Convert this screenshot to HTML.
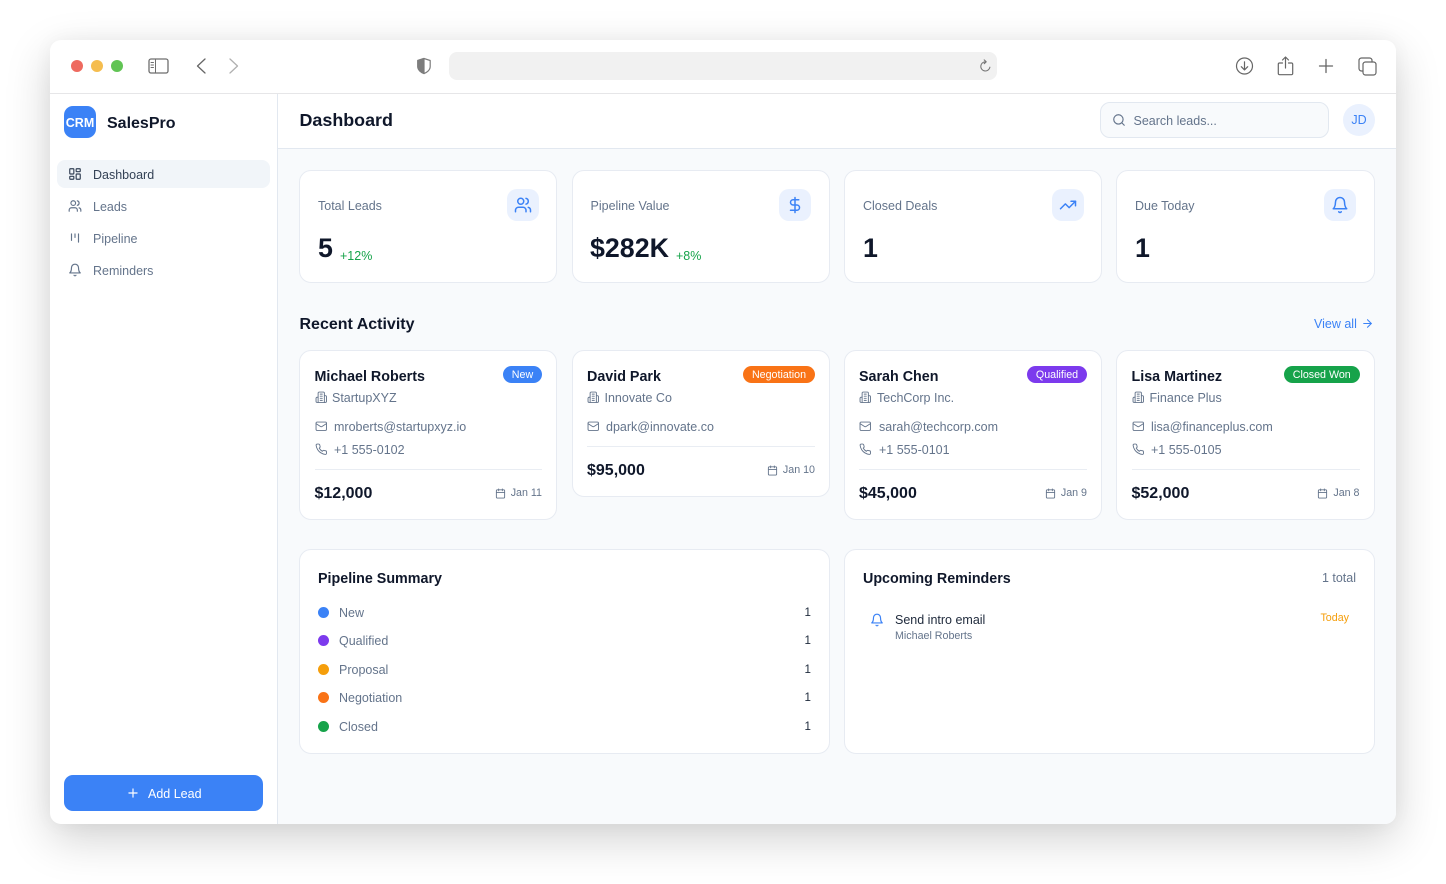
<!DOCTYPE html>
<html><head><meta charset="utf-8"><title>SalesPro</title>
<style>
html,body{margin:0;padding:0;width:1446px;height:884px;overflow:hidden;background:#fff;font-family:"Liberation Sans",sans-serif}
body{filter:blur(.3px)}
.a,.t,svg{position:absolute}
.t{line-height:20px;height:20px;white-space:nowrap;font-size:12.5px;color:#64748b}
.r{text-align:right}
.b{font-weight:700;color:#0f172a}
.card{position:absolute;background:#fff;border:1px solid #e7ebf2;border-radius:12px;box-sizing:border-box}
svg{fill:none;stroke:currentColor;stroke-linecap:round;stroke-linejoin:round;stroke-width:2}
.ib{position:absolute;width:32px;height:32px;top:189px;background:#eaf1fe;border-radius:10px;color:#3b82f6}
.badge{position:absolute;top:366px;height:17px;line-height:18px;border-radius:9px;color:#fff;font-size:10.7px;text-align:center}
.line{position:absolute;height:1px;background:#e9edf3}
.dot{position:absolute;left:318px;width:11px;height:11px;border-radius:50%}
</style></head><body>
<div class="a" id="win" style="left:50px;top:40px;width:1346px;height:784px;background:#fff;border-radius:11px;box-shadow:0 15px 45px rgba(0,0,0,.18),0 0 20px rgba(0,0,0,.04)"></div>
<div class="a" style="left:278px;top:94px;width:1118px;height:730px;background:#f8fafc;border-bottom-right-radius:11px"></div>
<div class="a" style="left:50px;top:93px;width:1346px;height:1px;background:#e6e6e8"></div>
<div class="a" style="left:277px;top:94px;width:1px;height:730px;background:#e2e8f0"></div>
<div class="a" style="left:278px;top:94px;width:1118px;height:54px;background:#fff;border-bottom:1px solid #e2e8f0"></div>

<!-- toolbar -->
<div class="a" style="left:70.750px;top:59.750px;width:12.500px;height:12.500px;border-radius:50%;background:#ee6a5f"></div>
<div class="a" style="left:90.750px;top:59.750px;width:12.500px;height:12.500px;border-radius:50%;background:#f5bd4f"></div>
<div class="a" style="left:110.750px;top:59.750px;width:12.500px;height:12.500px;border-radius:50%;background:#61c454"></div>
<svg style="left:148px;top:57px;color:#6e6e6e;stroke-width:1.3" width="21" height="18" viewBox="0 0 21 18"><rect x="1" y="2" width="19" height="14" rx="2"/><path d="M7.500 2v14M3 5.500h2.500M3 8h2.500M3 10.500h2.500" stroke-width="1"/></svg>
<svg style="left:194px;top:57px;color:#666;stroke-width:1.3" width="14" height="18" viewBox="0 0 14 18"><path d="M11 2 3.500 9l7.500 7"/></svg>
<svg style="left:227px;top:57px;color:#b0b0b0;stroke-width:1.3" width="14" height="18" viewBox="0 0 14 18"><path d="M3 2l7.500 7L3 16"/></svg>
<svg style="left:416px;top:57px;color:#7d7d7d;stroke-width:1.2" width="16" height="18" viewBox="0 0 16 18"><path d="M8 1.500 1.800 3.500v6C1.800 13 5 15.500 8 16.500c3-1 6.200-3.500 6.200-7v-6z"/><path d="M8 1.500 1.800 3.500v6C1.800 13 5 15.500 8 16.500z" fill="#7d7d7d"/></svg>
<div class="a" style="left:449px;top:52px;width:548px;height:28px;border-radius:8px;background:#f1f1f1"></div>
<svg style="left:978px;top:59px;color:#757575;stroke-width:1.1" width="14" height="14" viewBox="0 0 14 14"><path d="M7.500 2.800a4.600 4.600 0 1 0 4.400 5.400M6.200 .9l2 1.900-2 1.900"/></svg>
<svg style="left:1235px;top:57px;color:#666;stroke-width:1.2" width="19" height="18" viewBox="0 0 19 18"><circle cx="9.500" cy="9" r="8"/><path d="M9.500 4.800v8M6.300 9.700l3.200 3.200 3.200-3.200"/></svg>
<svg style="left:1277px;top:56px;color:#666;stroke-width:1.2" width="17" height="20" viewBox="0 0 17 20"><path d="M5.500 7H2.500a1.200 1.200 0 0 0-1.200 1.200v9.300a1.200 1.200 0 0 0 1.200 1.200h12a1.200 1.200 0 0 0 1.200-1.200V8.200A1.200 1.200 0 0 0 14.500 7h-3M8.500 12V1.500M5.500 4l3-3 3 3"/></svg>
<svg style="left:1318px;top:58px;color:#666;stroke-width:1.3" width="16" height="16" viewBox="0 0 16 16"><path d="M8 1.500v13M1.500 8h13"/></svg>
<svg style="left:1358px;top:57px;color:#666;stroke-width:1.2" width="19" height="19" viewBox="0 0 19 19"><rect x="5" y="5" width="13" height="13" rx="2.500"/><path d="M5 14H3.500A2.500 2.500 0 0 1 1 11.500v-8A2.500 2.500 0 0 1 3.500 1h8A2.500 2.500 0 0 1 14 3.500V5"/></svg>

<!-- sidebar -->
<div class="a" style="left:64px;top:106px;width:32px;height:32px;border-radius:9px;background:#3b82f6;color:#fff;font-weight:700;font-size:12.5px;line-height:34px;text-align:center">CRM</div>
<div class="t b" style="left:107px;top:113.500px;font-size:16px;color:#0f172a">SalesPro</div>
<div class="a" style="left:57px;top:160px;width:213px;height:28px;border-radius:8px;background:#f1f5f9"></div>
<svg style="left:68px;top:167px;color:#334155" width="14" height="14" viewBox="0 0 24 24"><rect x="3" y="3" width="7" height="9" rx="1"/><rect x="14" y="3" width="7" height="5" rx="1"/><rect x="14" y="12" width="7" height="9" rx="1"/><rect x="3" y="16" width="7" height="5" rx="1"/></svg>
<div class="t" style="left:93px;top:164.500px;color:#334155">Dashboard</div>
<svg style="left:68px;top:199px;color:#64748b" width="14" height="14" viewBox="0 0 24 24"><path d="M16 21v-2a4 4 0 0 0-4-4H6a4 4 0 0 0-4 4v2"/><circle cx="9" cy="7" r="4"/><path d="M22 21v-2a4 4 0 0 0-3-3.870"/><path d="M16 3.130a4 4 0 0 1 0 7.750"/></svg>
<div class="t" style="left:93px;top:196.500px">Leads</div>
<svg style="left:68px;top:231px;color:#64748b" width="14" height="14" viewBox="0 0 24 24"><path d="M6 5v11M12 5v6M18 5v14"/></svg>
<div class="t" style="left:93px;top:228.500px">Pipeline</div>
<svg style="left:68px;top:263px;color:#64748b" width="14" height="14" viewBox="0 0 24 24"><path d="M6 8a6 6 0 0 1 12 0c0 7 3 9 3 9H3s3-2 3-9"/><path d="M10.300 21a1.940 1.940 0 0 0 3.400 0"/></svg>
<div class="t" style="left:93px;top:260.500px">Reminders</div>
<div class="a" style="left:64px;top:775px;width:199px;height:36px;border-radius:9px;background:#3b82f6"></div>
<svg style="left:126px;top:786px;color:#fff" width="14" height="14" viewBox="0 0 24 24"><path d="M5 12h14M12 5v14"/></svg>
<div class="t" style="left:148px;top:783.500px;color:#fff">Add Lead</div>

<!-- header -->
<div class="t b" style="left:299.500px;top:110px;font-size:17.900px">Dashboard</div>
<div class="a" style="left:1100px;top:102px;width:229px;height:36px;box-sizing:border-box;border:1px solid #e2e8f0;border-radius:10px;background:#f8fafc"></div>
<svg style="left:1112px;top:113px;color:#64748b" width="14" height="14" viewBox="0 0 24 24"><circle cx="11" cy="11" r="8"/><path d="m21 21-4.300-4.300"/></svg>
<div class="t" style="left:1133.500px;top:110.500px">Search leads...</div>
<div class="a" style="left:1343px;top:104px;width:32px;height:32px;border-radius:50%;background:#eaf1fe;color:#3b82f6;font-size:12.500px;line-height:33px;text-align:center">JD</div>

<!-- stats -->
<div class="card" style="left:299px;top:170px;width:258px;height:113px"></div>
<div class="card" style="left:572px;top:170px;width:258px;height:113px"></div>
<div class="card" style="left:844px;top:170px;width:258px;height:113px"></div>
<div class="card" style="left:1116px;top:170px;width:259px;height:113px"></div>
<div class="t" style="left:318px;top:195.500px">Total Leads</div>
<div class="t" style="left:590.500px;top:195.500px">Pipeline Value</div>
<div class="t" style="left:863px;top:195.500px">Closed Deals</div>
<div class="t" style="left:1135px;top:195.500px">Due Today</div>
<div class="ib" style="left:507px"><svg style="left:7px;top:7px" width="18" height="18" viewBox="0 0 24 24"><path d="M16 21v-2a4 4 0 0 0-4-4H6a4 4 0 0 0-4 4v2"/><circle cx="9" cy="7" r="4"/><path d="M22 21v-2a4 4 0 0 0-3-3.870"/><path d="M16 3.130a4 4 0 0 1 0 7.750"/></svg></div>
<div class="ib" style="left:779px"><svg style="left:7px;top:7px" width="18" height="18" viewBox="0 0 24 24"><path d="M12 2v20"/><path d="M17 5H9.500a3.500 3.500 0 0 0 0 7h5a3.500 3.500 0 0 1 0 7H6"/></svg></div>
<div class="ib" style="left:1052px"><svg style="left:7px;top:7px" width="18" height="18" viewBox="0 0 24 24"><path d="M22 7l-8.500 8.500-5-5L2 17"/><path d="M16 7h6v6"/></svg></div>
<div class="ib" style="left:1324px"><svg style="left:7px;top:7px" width="18" height="18" viewBox="0 0 24 24"><path d="M6 8a6 6 0 0 1 12 0c0 7 3 9 3 9H3s3-2 3-9"/><path d="M10.300 21a1.940 1.940 0 0 0 3.400 0"/></svg></div>
<div class="t b" style="left:318px;top:238px;font-size:26.800px">5</div>
<div class="t" style="left:340px;top:245.500px;color:#16a34a">+12%</div>
<div class="t b" style="left:590px;top:238px;font-size:26.800px">$282K</div>
<div class="t" style="left:676px;top:245.500px;color:#16a34a">+8%</div>
<div class="t b" style="left:863px;top:238px;font-size:26.800px">1</div>
<div class="t b" style="left:1135px;top:238px;font-size:26.800px">1</div>

<!-- recent -->
<div class="t b" style="left:299.500px;top:314.500px;font-size:16px">Recent Activity</div>
<div class="t" style="left:1314px;top:313.500px;color:#3b82f6">View all</div>
<svg style="left:1361px;top:317px;color:#3b82f6" width="13" height="13" viewBox="0 0 24 24"><path d="M5 12h14"/><path d="m12 5 7 7-7 7"/></svg>

<!-- lead 1 -->
<div class="card" style="left:299px;top:350px;width:258px;height:170px"></div>
<div class="t b" style="left:314.500px;top:367px;font-size:14.300px;color:#0f172a">Michael Roberts</div>
<div class="badge" style="left:503px;width:39px;background:#3b82f6">New</div>
<svg style="left:314.500px;top:391px;color:#64748b;stroke-width:1.800" width="12.500" height="12.500" viewBox="0 0 24 24"><path d="M6 22V4a2 2 0 0 1 2-2h8a2 2 0 0 1 2 2v18Z"/><path d="M6 12H4a2 2 0 0 0-2 2v6a2 2 0 0 0 2 2h2"/><path d="M18 9h2a2 2 0 0 1 2 2v9a2 2 0 0 1-2 2h-2"/><path d="M10 6h4M10 10h4M10 14h4M10 18h4"/></svg>
<div class="t" style="left:332px;top:387.500px">StartupXYZ</div>
<svg style="left:314.500px;top:420px;color:#64748b;stroke-width:1.800" width="12.500" height="12.500" viewBox="0 0 24 24"><rect x="2" y="4" width="20" height="16" rx="2"/><path d="m22 7-8.970 5.700a1.940 1.940 0 0 1-2.060 0L2 7"/></svg>
<div class="t" style="left:334px;top:416.500px">mroberts@startupxyz.io</div>
<svg style="left:314.500px;top:443px;color:#64748b;stroke-width:1.800" width="12.500" height="12.500" viewBox="0 0 24 24"><path d="M22 16.920v3a2 2 0 0 1-2.180 2 19.790 19.790 0 0 1-8.630-3.070 19.500 19.500 0 0 1-6-6 19.790 19.790 0 0 1-3.070-8.670A2 2 0 0 1 4.110 2h3a2 2 0 0 1 2 1.720 12.840 12.840 0 0 0 .7 2.810 2 2 0 0 1-.45 2.110L8.090 9.910a16 16 0 0 0 6 6l1.270-1.270a2 2 0 0 1 2.110-.45 12.840 12.840 0 0 0 2.810.7A2 2 0 0 1 22 16.920z"/></svg>
<div class="t" style="left:334px;top:439.500px">+1 555-0102</div>
<div class="line" style="left:314.500px;top:469px;width:227.500px"></div>
<div class="t b" style="left:314.500px;top:484px;font-size:16px">$12,000</div>
<svg style="left:495px;top:487.500px;color:#64748b" width="11" height="11" viewBox="0 0 24 24"><rect x="3" y="4" width="18" height="18" rx="2"/><path d="M16 2v4M8 2v4M3 10h18"/></svg>
<div class="t r" style="right:904px;top:483px;font-size:10.700px">Jan 11</div>

<!-- lead 2 -->
<div class="card" style="left:572px;top:350px;width:258px;height:147px"></div>
<div class="t b" style="left:587px;top:367px;font-size:14.300px;color:#0f172a">David Park</div>
<div class="badge" style="left:743px;width:72px;background:#f97316">Negotiation</div>
<svg style="left:587px;top:391px;color:#64748b;stroke-width:1.800" width="12.500" height="12.500" viewBox="0 0 24 24"><path d="M6 22V4a2 2 0 0 1 2-2h8a2 2 0 0 1 2 2v18Z"/><path d="M6 12H4a2 2 0 0 0-2 2v6a2 2 0 0 0 2 2h2"/><path d="M18 9h2a2 2 0 0 1 2 2v9a2 2 0 0 1-2 2h-2"/><path d="M10 6h4M10 10h4M10 14h4M10 18h4"/></svg>
<div class="t" style="left:604.500px;top:387.500px">Innovate Co</div>
<svg style="left:587px;top:420px;color:#64748b;stroke-width:1.800" width="12.500" height="12.500" viewBox="0 0 24 24"><rect x="2" y="4" width="20" height="16" rx="2"/><path d="m22 7-8.970 5.700a1.940 1.940 0 0 1-2.060 0L2 7"/></svg>
<div class="t" style="left:606px;top:416.500px">dpark@innovate.co</div>
<div class="line" style="left:587px;top:446px;width:228px"></div>
<div class="t b" style="left:587px;top:461px;font-size:16px">$95,000</div>
<svg style="left:767px;top:464.500px;color:#64748b" width="11" height="11" viewBox="0 0 24 24"><rect x="3" y="4" width="18" height="18" rx="2"/><path d="M16 2v4M8 2v4M3 10h18"/></svg>
<div class="t r" style="right:631px;top:460px;font-size:10.700px">Jan 10</div>

<!-- lead 3 -->
<div class="card" style="left:844px;top:350px;width:258px;height:170px"></div>
<div class="t b" style="left:859px;top:367px;font-size:14.300px;color:#0f172a">Sarah Chen</div>
<div class="badge" style="left:1027px;width:60px;background:#7c3aed">Qualified</div>
<svg style="left:859px;top:391px;color:#64748b;stroke-width:1.800" width="12.500" height="12.500" viewBox="0 0 24 24"><path d="M6 22V4a2 2 0 0 1 2-2h8a2 2 0 0 1 2 2v18Z"/><path d="M6 12H4a2 2 0 0 0-2 2v6a2 2 0 0 0 2 2h2"/><path d="M18 9h2a2 2 0 0 1 2 2v9a2 2 0 0 1-2 2h-2"/><path d="M10 6h4M10 10h4M10 14h4M10 18h4"/></svg>
<div class="t" style="left:877px;top:387.500px">TechCorp Inc.</div>
<svg style="left:859px;top:420px;color:#64748b;stroke-width:1.800" width="12.500" height="12.500" viewBox="0 0 24 24"><rect x="2" y="4" width="20" height="16" rx="2"/><path d="m22 7-8.970 5.700a1.940 1.940 0 0 1-2.060 0L2 7"/></svg>
<div class="t" style="left:879px;top:416.500px">sarah@techcorp.com</div>
<svg style="left:859px;top:443px;color:#64748b;stroke-width:1.800" width="12.500" height="12.500" viewBox="0 0 24 24"><path d="M22 16.920v3a2 2 0 0 1-2.180 2 19.790 19.790 0 0 1-8.630-3.070 19.500 19.500 0 0 1-6-6 19.790 19.790 0 0 1-3.070-8.670A2 2 0 0 1 4.110 2h3a2 2 0 0 1 2 1.720 12.840 12.840 0 0 0 .7 2.810 2 2 0 0 1-.45 2.110L8.090 9.910a16 16 0 0 0 6 6l1.270-1.270a2 2 0 0 1 2.110-.45 12.840 12.840 0 0 0 2.810.7A2 2 0 0 1 22 16.920z"/></svg>
<div class="t" style="left:879px;top:439.500px">+1 555-0101</div>
<div class="line" style="left:859px;top:469px;width:228px"></div>
<div class="t b" style="left:859px;top:484px;font-size:16px">$45,000</div>
<svg style="left:1045px;top:487.500px;color:#64748b" width="11" height="11" viewBox="0 0 24 24"><rect x="3" y="4" width="18" height="18" rx="2"/><path d="M16 2v4M8 2v4M3 10h18"/></svg>
<div class="t r" style="right:359px;top:483px;font-size:10.700px">Jan 9</div>

<!-- lead 4 -->
<div class="card" style="left:1116px;top:350px;width:259px;height:170px"></div>
<div class="t b" style="left:1131.500px;top:367px;font-size:14.300px;color:#0f172a">Lisa Martinez</div>
<div class="badge" style="left:1284px;width:75.500px;background:#16a34a">Closed Won</div>
<svg style="left:1131.500px;top:391px;color:#64748b;stroke-width:1.800" width="12.500" height="12.500" viewBox="0 0 24 24"><path d="M6 22V4a2 2 0 0 1 2-2h8a2 2 0 0 1 2 2v18Z"/><path d="M6 12H4a2 2 0 0 0-2 2v6a2 2 0 0 0 2 2h2"/><path d="M18 9h2a2 2 0 0 1 2 2v9a2 2 0 0 1-2 2h-2"/><path d="M10 6h4M10 10h4M10 14h4M10 18h4"/></svg>
<div class="t" style="left:1149.500px;top:387.500px">Finance Plus</div>
<svg style="left:1131.500px;top:420px;color:#64748b;stroke-width:1.800" width="12.500" height="12.500" viewBox="0 0 24 24"><rect x="2" y="4" width="20" height="16" rx="2"/><path d="m22 7-8.970 5.700a1.940 1.940 0 0 1-2.060 0L2 7"/></svg>
<div class="t" style="left:1151px;top:416.500px">lisa@financeplus.com</div>
<svg style="left:1131.500px;top:443px;color:#64748b;stroke-width:1.800" width="12.500" height="12.500" viewBox="0 0 24 24"><path d="M22 16.920v3a2 2 0 0 1-2.180 2 19.790 19.790 0 0 1-8.630-3.070 19.500 19.500 0 0 1-6-6 19.790 19.790 0 0 1-3.070-8.670A2 2 0 0 1 4.110 2h3a2 2 0 0 1 2 1.720 12.840 12.840 0 0 0 .7 2.810 2 2 0 0 1-.45 2.110L8.090 9.910a16 16 0 0 0 6 6l1.270-1.270a2 2 0 0 1 2.110-.45 12.840 12.840 0 0 0 2.810.7A2 2 0 0 1 22 16.920z"/></svg>
<div class="t" style="left:1151px;top:439.500px">+1 555-0105</div>
<div class="line" style="left:1131.500px;top:469px;width:228px"></div>
<div class="t b" style="left:1131.500px;top:484px;font-size:16px">$52,000</div>
<svg style="left:1317px;top:487.500px;color:#64748b" width="11" height="11" viewBox="0 0 24 24"><rect x="3" y="4" width="18" height="18" rx="2"/><path d="M16 2v4M8 2v4M3 10h18"/></svg>
<div class="t r" style="right:86.500px;top:483px;font-size:10.700px">Jan 8</div>

<!-- pipeline summary -->
<div class="card" style="left:299px;top:549px;width:531px;height:205px"></div>
<div class="t b" style="left:318px;top:569px;font-size:14.300px;color:#0f172a">Pipeline Summary</div>
<div class="dot" style="top:606.500px;background:#3b82f6"></div><div class="t" style="left:339px;top:602.500px">New</div><div class="t r" style="right:635px;top:602.500px;color:#1e293b;font-size:11.600px">1</div>
<div class="dot" style="top:635px;background:#7c3aed"></div><div class="t" style="left:339px;top:631px">Qualified</div><div class="t r" style="right:635px;top:631px;color:#1e293b;font-size:11.600px">1</div>
<div class="dot" style="top:663.500px;background:#f59e0b"></div><div class="t" style="left:339px;top:659.500px">Proposal</div><div class="t r" style="right:635px;top:659.500px;color:#1e293b;font-size:11.600px">1</div>
<div class="dot" style="top:692px;background:#f97316"></div><div class="t" style="left:339px;top:688px">Negotiation</div><div class="t r" style="right:635px;top:688px;color:#1e293b;font-size:11.600px">1</div>
<div class="dot" style="top:720.500px;background:#16a34a"></div><div class="t" style="left:339px;top:716.500px">Closed</div><div class="t r" style="right:635px;top:716.500px;color:#1e293b;font-size:11.600px">1</div>

<!-- reminders -->
<div class="card" style="left:844px;top:549px;width:531px;height:205px"></div>
<div class="t b" style="left:863px;top:569px;font-size:14.300px;color:#0f172a">Upcoming Reminders</div>
<div class="t r" style="right:90px;top:568px">1 total</div>
<svg style="left:870px;top:612.500px;color:#3b82f6" width="14" height="14" viewBox="0 0 24 24"><path d="M6 8a6 6 0 0 1 12 0c0 7 3 9 3 9H3s3-2 3-9"/><path d="M10.300 21a1.940 1.940 0 0 0 3.400 0"/></svg>
<div class="t" style="left:895px;top:609.500px;color:#1e293b">Send intro email</div>
<div class="t" style="left:895px;top:625.500px;font-size:10.700px">Michael Roberts</div>
<div class="t r" style="right:97px;top:607.500px;font-size:10.700px;color:#f59e0b">Today</div>
</body></html>
